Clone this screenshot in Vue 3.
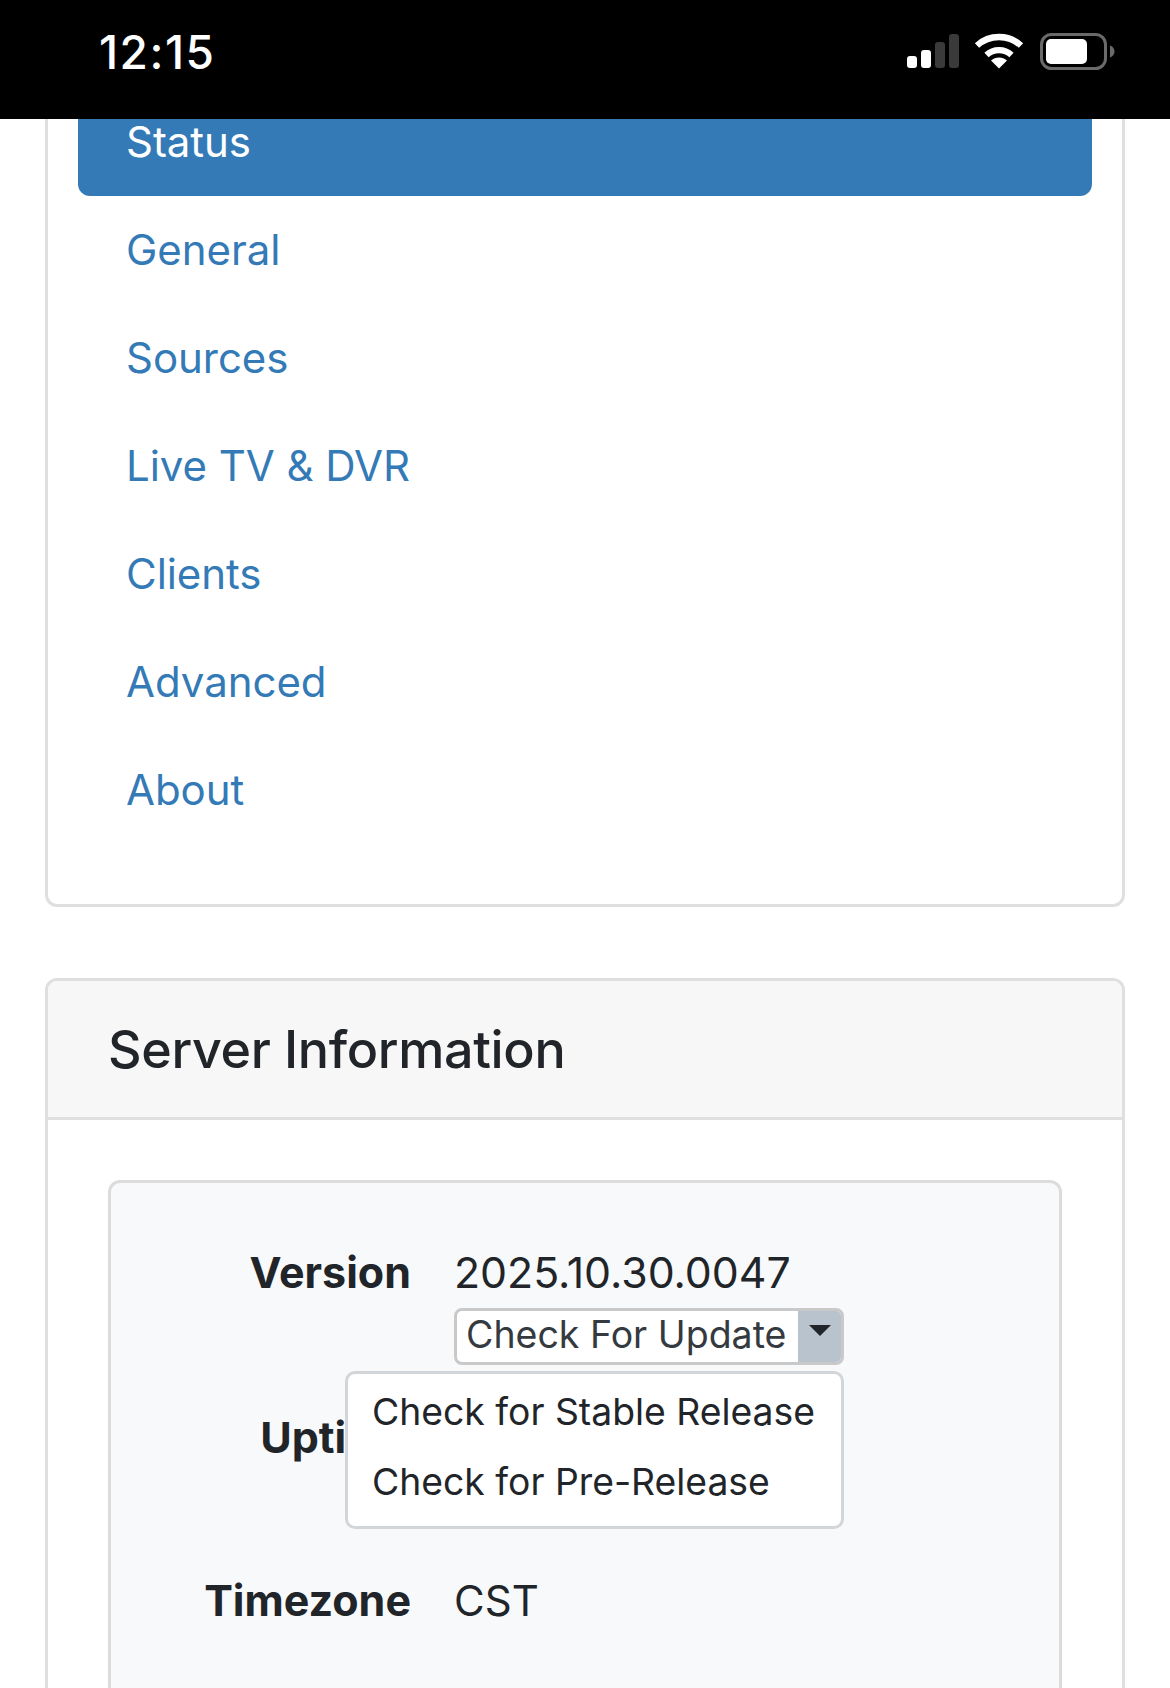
<script setup>
const items = ['General', 'Sources', 'Live TV & DVR', 'Clients', 'Advanced', 'About']
</script>

<template>
  <div class="page">
    <header class="statusbar">
      <span class="time">12:15</span>
      <div class="icons">
        <svg class="signal" width="52" height="36" viewBox="0 0 52 36">
          <rect x="0" y="23" width="10" height="12" rx="3" fill="#fff" />
          <rect x="14" y="17" width="10" height="18" rx="3" fill="#fff" />
          <rect x="28" y="9" width="10" height="26" rx="3" fill="#3a3a3a" />
          <rect x="42" y="1" width="10" height="34" rx="3" fill="#3a3a3a" />
        </svg>
        <svg class="wifi" width="50" height="36" viewBox="0 0 50 36">
          <path d="M3 12.5C15.5 1.2 34.5 1.2 47 12.5" fill="none" stroke="#fff" stroke-width="6.4" />
          <path d="M12.5 22C19.5 15.5 30.5 15.5 37.5 22" fill="none" stroke="#fff" stroke-width="6.2" />
          <path d="M25 35.5L17 27.5C21.5 23.5 28.5 23.5 33 27.5Z" fill="#fff" />
        </svg>
        <svg class="battery" width="75" height="38" viewBox="0 0 75 38">
          <rect x="1.5" y="1.5" width="64" height="34" rx="10" fill="none" stroke="#6a6a6a" stroke-width="3" />
          <rect x="6" y="6" width="41" height="25" rx="5" fill="#fff" />
          <path d="M70 12.5C73 13.5 74.5 16 74.5 18.5C74.5 21 73 23.5 70 24.5Z" fill="#6a6a6a" />
        </svg>
      </div>
    </header>

    <main class="content">
      <section class="card nav-card">
        <a class="nav-item active">Status</a>
        <a v-for="item in items" :key="item" class="nav-item">{{ item }}</a>
      </section>

      <section class="card info-card">
        <h2 class="card-header">Server Information</h2>
        <div class="card-body">
          <div class="well">
            <div class="row">
              <div class="label">Version</div>
              <div class="value">
                <div class="version">2025.10.30.0047</div>
                <div class="btn-group">
                  <span class="btn-main">Check For Update</span>
                  <span class="btn-caret"><i class="caret"></i></span>
                </div>
              </div>
            </div>
            <div class="row uptime">
              <div class="label">Uptime</div>
            </div>
            <div class="row">
              <div class="label">Timezone</div>
              <div class="value">CST</div>
            </div>
            <ul class="menu">
              <li>Check for Stable Release</li>
              <li>Check for Pre-Release</li>
            </ul>
          </div>
        </div>
      </section>
    </main>
  </div>
</template>

<style>
html, body { margin: 0; background: #fff; }
</style>

<style scoped>
.page {
  width: 1170px;
  height: 1688px;
  overflow: hidden;
  background: #fff;
  font-family: Inter, "Liberation Sans", sans-serif;
  color: #212529;
}
.statusbar {
  position: relative;
  z-index: 2;
  height: 119px;
  background: #000;
  display: flex;
  justify-content: space-between;
  padding: 0 55px 0 99px;
  box-sizing: border-box;
}
.time {
  color: #fff;
  font-size: 46px;
  font-weight: 500;
  line-height: 105px;
  letter-spacing: 1.5px;
}
.icons {
  display: flex;
  align-items: flex-start;
  padding-top: 33px;
}
.signal { margin-right: 15px; }
.wifi { margin-right: 16px; }
.content {
  margin-top: -61px;
  padding: 0 45px;
}
.card {
  border: 3px solid #dfdfdf;
  border-radius: 12px;
  background: #fff;
}
.nav-card {
  padding: 27px 30px 60px;
  margin-bottom: 71px;
}
.nav-item {
  display: block;
  height: 108px;
  line-height: 108px;
  padding: 0 48px;
  font-size: 42px;
  letter-spacing: -0.05px;
  color: #337ab7;
  border-radius: 12px;
}
.nav-item.active {
  background: #337ab7;
  color: #fff;
}
.info-card {
  height: 900px;
}
.card-header {
  margin: 0;
  height: 136px;
  line-height: 138px;
  padding: 0 60px;
  font-size: 52px;
  font-weight: 500;
  letter-spacing: -0.35px;
  background: #f7f7f7;
  border-bottom: 3px solid #dfdfdf;
  border-radius: 9px 9px 0 0;
}
.card-body {
  padding: 60px 60px 0;
}
.well {
  position: relative;
  height: 700px;
  padding-top: 58px;
  box-sizing: border-box;
  background: #f8f9fa;
  border: 3px solid #dcdcdc;
  border-radius: 12px;
}
.row {
  display: flex;
  gap: 43px;
  font-size: 42px;
  line-height: 63px;
}
.label {
  width: 300px;
  flex: none;
  text-align: right;
  font-size: 43px;
  font-weight: 700;
}
.version {
  font-size: 42.8px;
}
.btn-group {
  display: flex;
  width: 390px;
  height: 57px;
  margin-top: 4px;
  box-sizing: border-box;
  border: 3px solid #c9c9c9;
  border-radius: 8px;
  overflow: hidden;
  background: #fff;
  font-size: 37.5px;
  line-height: 47px;
  color: #343a40;
}
.btn-main {
  flex: 1;
  padding-left: 9px;
  white-space: nowrap;
}
.btn-caret {
  flex: none;
  width: 43px;
  background: #b9c3cd;
  display: flex;
  justify-content: center;
  padding-top: 14px;
  box-sizing: border-box;
}
.caret {
  width: 0;
  height: 0;
  border-left: 11px solid transparent;
  border-right: 11px solid transparent;
  border-top: 11px solid #212529;
}
.uptime {
  margin-top: 41px;
}
.row.uptime + .row {
  margin-top: 100px;
}
.menu {
  position: absolute;
  left: 234px;
  top: 188px;
  width: 499px;
  height: 158px;
  margin: 0;
  padding: 3px 0 0;
  box-sizing: border-box;
  list-style: none;
  background: #fff;
  border: 3px solid #d3d6d9;
  border-radius: 10px;
  font-size: 37.3px;
}
.menu li {
  height: 70px;
  line-height: 70px;
  padding-left: 24px;
  white-space: nowrap;
}
</style>
